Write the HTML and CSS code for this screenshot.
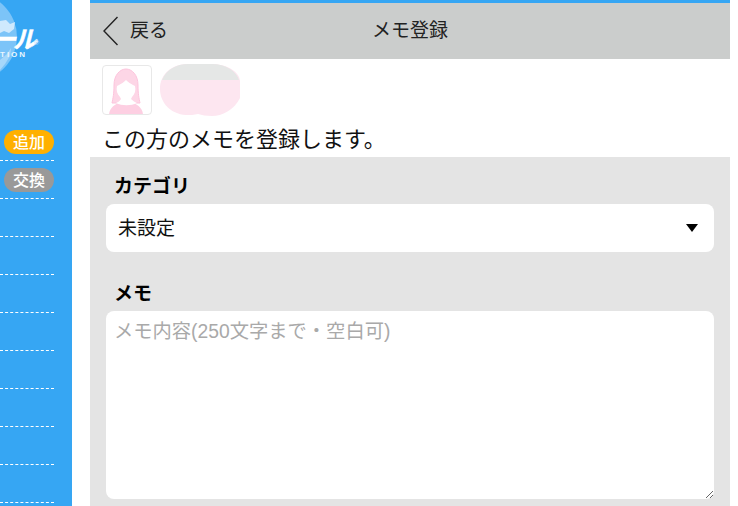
FILE: index.html
```html
<!DOCTYPE html>
<html lang="ja">
<head>
<meta charset="utf-8">
<title>メモ登録</title>
<link rel="stylesheet" href="styles.css">
</head>
<body>
<div class="page">
  <aside class="sidebar">
    <div class="logo">
      <svg class="globe" width="18" height="80" viewBox="0 0 18 80">
        <circle cx="-27" cy="37" r="44" fill="#7cc4f8"/>
        <path d="M0 21 L6 20 L10 24 L15 22 L14 29 L9 33 L4 31 L0 33 Z" fill="#cfe9fd"/>
        <path d="M0 60 L7 54 L11 48 L10 56 L5 64 L0 70 Z" fill="#a6d7fa"/>
      </svg>
      <span class="logo-name">ール</span>
      <span class="logo-mark">®</span>
      <span class="logo-sub">TION</span>
    </div>
    <div class="side-row"><span class="pill pill-add">追加</span></div>
    <div class="side-row"><span class="pill pill-swap">交換</span></div>
    <div class="side-row"></div>
    <div class="side-row"></div>
    <div class="side-row"></div>
    <div class="side-row"></div>
    <div class="side-row"></div>
    <div class="side-row"></div>
    <div class="side-row"></div>
    <div class="side-row"></div>
  </aside>
  <main class="main">
    <header class="header">
      <a class="back">
        <svg width="16" height="30" viewBox="0 0 16 30"><path d="M14.5 1 L1 15 L14.5 29" fill="none" stroke="#222" stroke-width="1.4"/></svg>
        <span>戻る</span>
      </a>
      <h1 class="title">メモ登録</h1>
    </header>
    <div class="who">
      <div class="avatar">
        <svg width="48" height="48" viewBox="0 0 48 48">
          <path d="M9 37 C10 32 11 28 11 19 C11 9 17 3 23 3 C29 3 35 9 35 19 C35 28 36 32 37 37 Z" fill="#fdd6e6" stroke="#fcc4dc" stroke-width="1"/>
          <path d="M6 49 C6 42 12 38 18 36 L28 36 C34 38 40 42 40 49 Z" fill="#fdcfe2"/>
          <path d="M17 31 C14 28 13 24 14 20 L16 19 C18 18 21 16 23 14 C25 16 28 18 30 19 L32 20 C33 24 32 28 29 31 L28 33 C30 35 32 36 34 37 C28 40 19 40 13 37 C15 36 17 35 18 33 Z" fill="#fff"/>
        </svg>
      </div>
      <svg class="blob" width="80" height="52" viewBox="0 0 80 52">
        <path d="M28 0 H52 C68 0 80 9 80 17 V34 C74 46 62 52 52 52 C46 52 42 51 38 50 C34 51 30 51 26 51 C10 50 0 38 0 25 C0 10 12 0 28 0 Z" fill="#fde6f0"/>
        <path d="M28 0 H52 C66 0 76 7 79 16 H2 C6 6 16 0 28 0 Z" fill="#e5e7e6"/>
      </svg>
    </div>
    <p class="lead">この方のメモを登録します。</p>
    <form class="form">
      <label class="label label-cat">カテゴリ</label>
      <div class="select"><span>未設定</span><i class="caret"></i></div>
      <label class="label label-memo">メモ</label>
      <textarea class="memo" placeholder="メモ内容(250文字まで・空白可)"></textarea>
    </form>
  </main>
</div>
</body>
</html>
```
FILE: styles.css
```css
* { box-sizing: border-box; }
html, body { margin: 0; height: 100%; overflow: hidden; background: #fff; }
body { font-family: "Liberation Sans", "Noto Sans CJK JP", sans-serif; color: #111; }
.page { display: flex; height: 506px; width: 738px; }

.sidebar { width: 72px; flex: none; background: #36a6f3; overflow: hidden; padding-right: 18px; }
.logo { position: relative; height: 123px; }
.globe { position: absolute; left: 0; top: 0; }
.logo-name { position: absolute; right: 20px; top: 30px; height: 16px; color: #fff; font: italic 700 24px/16px "Noto Sans CJK JP", sans-serif; white-space: nowrap; letter-spacing: -3px; -webkit-text-stroke: 0.5px #fff; }
.logo-mark { position: absolute; left: 34px; top: 39px; color: #a9d9fb; font: 400 7px/8px "Liberation Sans", sans-serif; }
.logo-sub { position: absolute; left: 0; top: 50px; color: #eaf6fe; font: 700 8px/10px "Liberation Sans", sans-serif; letter-spacing: 2px; }

.side-row { height: 38px; border-bottom: 1px dashed #fff; display: flex; align-items: center; justify-content: flex-end; padding-top: 1px; flex: none; }
.pill { width: 50px; height: 24px; border-radius: 12px; color: #fff; font-size: 16px; line-height: 26px; text-align: center; font-weight: 500; }
.pill-add { background: #ffb000; }
.pill-swap { background: #999; }

.main { width: 640px; margin-left: 18px; flex: none; border-top: 3px solid #36a6f3; display: flex; flex-direction: column; }
.header { height: 56px; flex: none; background: #cbcdcc; position: relative; display: flex; align-items: center; justify-content: center; }
.back { position: absolute; left: 13px; top: 13px; display: flex; align-items: center; gap: 11px; font-size: 19px; line-height: 30px; color: #222; }
.back svg { display: block; }
.title { margin: 0; font-size: 19px; font-weight: 400; line-height: 30px; color: #222; }

.who { display: flex; align-items: flex-start; gap: 8px; height: 63px; padding: 5px 0 0 12px; flex: none; }
.avatar { width: 50px; height: 50px; margin-top: 1px; border: 1px solid #e8e8e8; border-radius: 4px; overflow: hidden; background: #fff; }
.avatar svg, .blob { display: block; }
.lead { margin: 0; padding: 2px 0 0 12px; height: 35px; font-size: 22px; line-height: 32px; color: #111; flex: none; white-space: nowrap; }

.form { flex: 1; background: #e4e4e4; padding: 17px 16px 0; display: flex; flex-direction: column; min-height: 0; }
.label { display: block; font-size: 19px; font-weight: 700; line-height: 26px; margin-left: 8px; color: #000; }
.select { margin-top: 4px; height: 48px; background: #fff; border-radius: 8px; display: flex; align-items: center; justify-content: space-between; padding: 0 16px 3px 12px; font-size: 19px; color: #111; flex: none; }
.caret { width: 0; height: 0; border-left: 6px solid transparent; border-right: 6px solid transparent; border-top: 8px solid #000; position: relative; top: 1px; }
.label-memo { margin-top: 29px; }
.memo { display: block; margin-top: 4px; width: 100%; height: 188px; flex: none; border: 0; outline: 0; border-radius: 8px; background: #fff; padding: 7px 8px; font: 19.3px/28px "Liberation Sans", "Noto Sans CJK JP", sans-serif; resize: vertical; }
.memo::placeholder { color: #a9a9a9; opacity: 1; }
```
